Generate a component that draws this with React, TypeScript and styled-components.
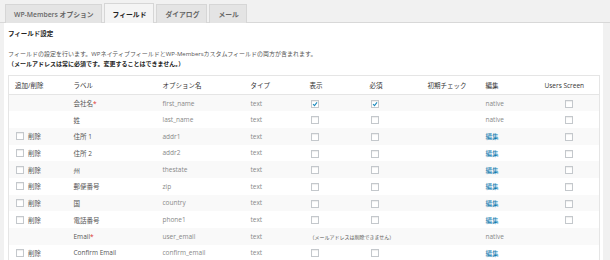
import React, { FunctionComponent } from 'react';
import styled, { createGlobalStyle } from 'styled-components';

const GlobalStyle = createGlobalStyle`
    body {
        margin: 0;
        background: #f1f1f1;
        font-family: "Open Sans", "Noto Sans CJK JP", sans-serif;
        color: #444;
    }
`;

const Page = styled.div`
    width: 610px;
    height: 260px;
    overflow: hidden;
`;

const TabBar = styled.div`
    display: flex;
    align-items: flex-end;
    gap: 2px;
    height: 22px;
    padding-left: 5px;
    border-bottom: 1px solid #d8d8d8;
`;

const Tab = styled.div<{ $active?: boolean }>`
    display: flex;
    align-items: center;
    height: 18px;
    padding: 0 7px 0 8px;
    font-size: 6.8px;
    font-weight: 600;
    color: ${p => (p.$active ? '#222' : '#666')};
    background: ${p => (p.$active ? '#f4f4f4' : '#e4e4e4')};
    border: 1px solid #d6d6d6;
    border-bottom: none;
    margin-bottom: -1px;
    ${p => p.$active && 'height: 19px;'}
`;

const Panel = styled.div`
    margin: 0 7px 0 4px;
    padding: 6px 4px 0;
    background: #fff;
    height: 240px;
`;

const Title = styled.h3`
    margin: 0;
    font-size: 6.5px;
    line-height: 10px;
    font-weight: 700;
    color: #222;
`;

const Desc = styled.p`
    margin: 10px 0 0;
    font-size: 6px;
    line-height: 10px;
    color: #555;
    white-space: nowrap;
    strong {
        color: #222;
    }
`;

const Table = styled.table`
    margin-top: 6px;
    width: 591px;
    table-layout: fixed;
    border-collapse: collapse;
    border: 1px solid #e5e5e5;
    font-size: 6.5px;
`;

const HeadCell = styled.th<{ $pad?: number }>`
    height: 18px;
    padding: 0 0 0 ${p => p.$pad ?? 3}px;
    text-align: left;
    font-weight: 400;
    color: #333;
    border-bottom: 1px solid #e5e5e5;
    white-space: nowrap;
`;

const Row = styled.tr<{ $odd: boolean }>`
    height: 16.7px;
    background: ${p => (p.$odd ? '#f9f9f9' : '#fff')};
`;

const Cell = styled.td<{ $pad?: number; $muted?: boolean }>`
    padding: 0 0 0 ${p => p.$pad ?? 3}px;
    color: ${p => (p.$muted ? '#888' : '#555')};
    white-space: nowrap;
    vertical-align: middle;
`;

const Box = styled.span<{ $checked?: boolean }>`
    display: inline-block;
    box-sizing: border-box;
    width: 8px;
    height: 8px;
    border: 1px solid #c4c8cc;
    background: #fff;
    box-shadow: inset 0 1px 1px rgba(0, 0, 0, 0.07);
    vertical-align: middle;
    position: relative;
    svg {
        position: absolute;
        left: 0;
        top: 0;
    }
`;

const DeleteLabel = styled.span`
    margin-left: 4px;
    vertical-align: middle;
`;

const Required = styled.span`
    color: #dc3232;
`;

const EditLink = styled.a`
    color: #0073aa;
    text-decoration: none;
`;

const Note = styled.span`
    font-size: 5px;
    color: #555;
`;

const Check: FunctionComponent<{ checked?: boolean }> = ({ checked }) => (
    <Box $checked={checked}>
        {checked && (
            <svg width="6" height="6" viewBox="0 0 6 6">
                <path d="M1 3.2 L2.5 4.6 L5 1.4" fill="none" stroke="#1e8cbe" strokeWidth="1.1" />
            </svg>
        )}
    </Box>
);

type Field = {
    label: string;
    option: string;
    required?: boolean;
    deletable: boolean;
    display?: boolean;
    must?: boolean;
    native?: boolean;
    email?: boolean;
};

const fields: Field[] = [
    { label: '会社名', option: 'first_name', required: true, deletable: false, display: true, must: true, native: true },
    { label: '姓', option: 'last_name', deletable: false, native: true },
    { label: '住所 1', option: 'addr1', deletable: true },
    { label: '住所 2', option: 'addr2', deletable: true },
    { label: '州', option: 'thestate', deletable: true },
    { label: '郵便番号', option: 'zip', deletable: true },
    { label: '国', option: 'country', deletable: true },
    { label: '電話番号', option: 'phone1', deletable: true },
    { label: 'Email', option: 'user_email', required: true, deletable: false, native: true, email: true },
    { label: 'Confirm Email', option: 'confirm_email', deletable: true },
];

const App: FunctionComponent = () => (
    <Page>
        <GlobalStyle />
        <TabBar>
            <Tab>WP-Members オプション</Tab>
            <Tab $active>フィールド</Tab>
            <Tab>ダイアログ</Tab>
            <Tab>メール</Tab>
        </TabBar>
        <Panel>
            <Title>フィールド設定</Title>
            <Desc>
                フィールドの設定を行います。WPネイティブフィールドとWP-Membersカスタムフィールドの両方が含まれます。
                <br />
                <strong>（メールアドレスは常に必須です。変更することはできません。）</strong>
            </Desc>
            <Table>
                <colgroup>
                    <col style={{ width: 62 }} />
                    <col style={{ width: 89 }} />
                    <col style={{ width: 88 }} />
                    <col style={{ width: 59 }} />
                    <col style={{ width: 60 }} />
                    <col style={{ width: 58 }} />
                    <col style={{ width: 58 }} />
                    <col style={{ width: 58 }} />
                    <col style={{ width: 59 }} />
                </colgroup>
                <thead>
                    <tr>
                        <HeadCell $pad={6}>追加/削除</HeadCell>
                        <HeadCell>ラベル</HeadCell>
                        <HeadCell>オプション名</HeadCell>
                        <HeadCell>タイプ</HeadCell>
                        <HeadCell>表示</HeadCell>
                        <HeadCell>必須</HeadCell>
                        <HeadCell>初期チェック</HeadCell>
                        <HeadCell>編集</HeadCell>
                        <HeadCell $pad={4}>Users Screen</HeadCell>
                    </tr>
                </thead>
                <tbody>
                    {fields.map((f, i) => (
                        <Row key={f.option} $odd={i % 2 === 0}>
                            <Cell $pad={7}>
                                {f.deletable && (
                                    <>
                                        <Check />
                                        <DeleteLabel>削除</DeleteLabel>
                                    </>
                                )}
                            </Cell>
                            <Cell>
                                {f.label}
                                {f.required && <Required>*</Required>}
                            </Cell>
                            <Cell $muted>{f.option}</Cell>
                            <Cell $muted>text</Cell>
                            {f.email ? (
                                <Cell colSpan={3}>
                                    <Note>（メールアドレスは削除できません）</Note>
                                </Cell>
                            ) : (
                                <>
                                    <Cell $pad={4}>
                                        <Check checked={f.display} />
                                    </Cell>
                                    <Cell $pad={4}>
                                        <Check checked={f.must} />
                                    </Cell>
                                    <Cell />
                                </>
                            )}
                            <Cell $muted={f.native}>
                                {f.native ? 'native' : <EditLink href="#">編集</EditLink>}
                            </Cell>
                            <Cell $pad={24}>{!f.email && f.option !== 'confirm_email' && <Check />}</Cell>
                        </Row>
                    ))}
                </tbody>
            </Table>
        </Panel>
    </Page>
);

export default App;
